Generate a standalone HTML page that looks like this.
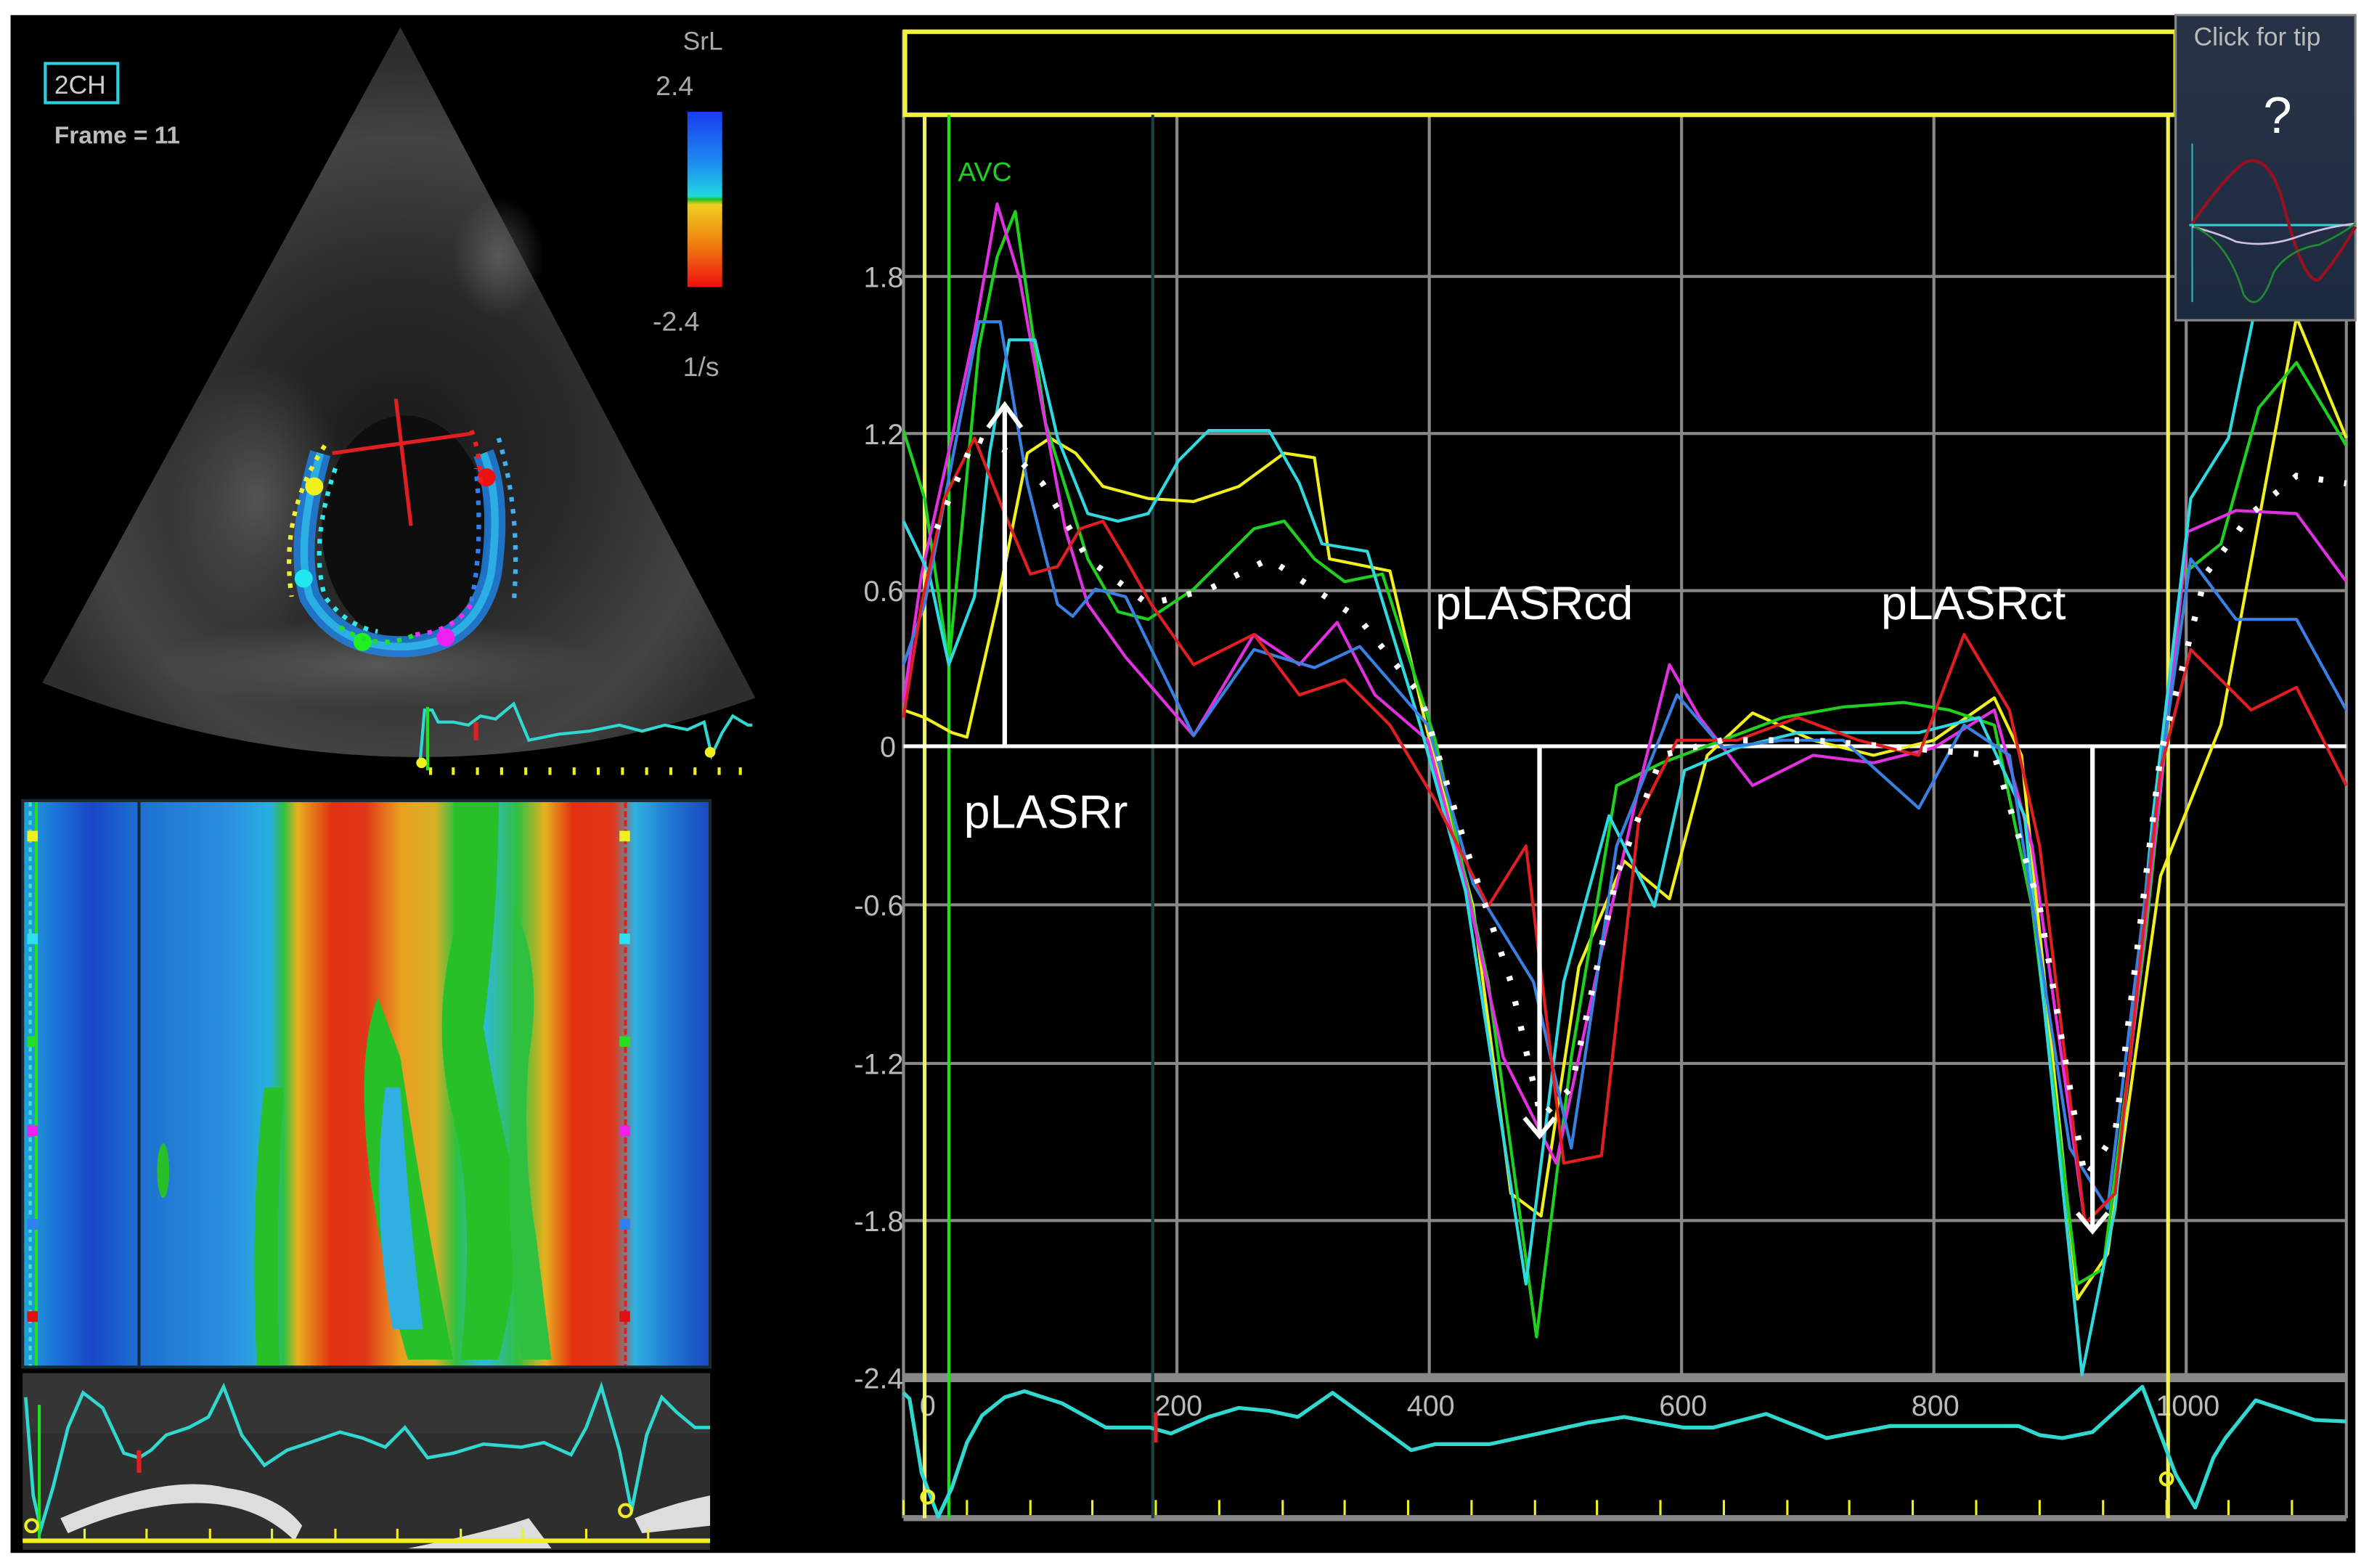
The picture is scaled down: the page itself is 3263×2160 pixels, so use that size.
<!DOCTYPE html>
<html><head><meta charset="utf-8"><style>
html,body{margin:0;padding:0;background:#fff;width:3263px;height:2160px;overflow:hidden}
svg{display:block}
text{font-family:"Liberation Sans","DejaVu Sans",sans-serif}
</style></head><body>
<svg width="3263" height="2160" viewBox="0 0 1568 1038" preserveAspectRatio="none" xmlns="http://www.w3.org/2000/svg">
<defs>
<radialGradient id="fan" cx="265" cy="300" r="260" gradientUnits="userSpaceOnUse">
<stop offset="0" stop-color="#1a1a1a"/><stop offset="0.45" stop-color="#2a2a2a"/><stop offset="0.8" stop-color="#444"/><stop offset="1" stop-color="#2e2e2e"/></radialGradient>
<linearGradient id="bar" x1="0" y1="0" x2="0" y2="1">
<stop offset="0" stop-color="#1a3cf0"/><stop offset="0.3" stop-color="#1e8ef0"/><stop offset="0.48" stop-color="#20d8e0"/><stop offset="0.5" stop-color="#20c020"/><stop offset="0.53" stop-color="#f0d020"/><stop offset="0.75" stop-color="#f08010"/><stop offset="1" stop-color="#f01010"/></linearGradient>
<linearGradient id="mm" x1="15" y1="0" x2="470" y2="0" gradientUnits="userSpaceOnUse">
<stop offset="0" stop-color="#20a8d8"/><stop offset="0.04" stop-color="#1d7ad8"/><stop offset="0.1" stop-color="#1848c8"/><stop offset="0.17" stop-color="#1e70d0"/><stop offset="0.3" stop-color="#2a90e0"/><stop offset="0.36" stop-color="#28b0e0"/><stop offset="0.38" stop-color="#30c040"/><stop offset="0.4" stop-color="#e8b020"/><stop offset="0.45" stop-color="#e03010"/><stop offset="0.5" stop-color="#e03818"/><stop offset="0.55" stop-color="#e8a020"/><stop offset="0.6" stop-color="#d8b028"/><stop offset="0.63" stop-color="#30c040"/><stop offset="0.67" stop-color="#30b8e0"/><stop offset="0.72" stop-color="#30c040"/><stop offset="0.76" stop-color="#e8b020"/><stop offset="0.8" stop-color="#e03010"/><stop offset="0.86" stop-color="#e03818"/><stop offset="0.89" stop-color="#30b0e0"/><stop offset="0.95" stop-color="#1e70d0"/><stop offset="1" stop-color="#1a48c0"/></linearGradient>
<linearGradient id="tip" x1="0" y1="0" x2="0" y2="1"><stop offset="0" stop-color="#2a3448"/><stop offset="1" stop-color="#1c2a40"/></linearGradient>
<radialGradient id="wall" cx="0.5" cy="0.5" r="0.5"><stop offset="0" stop-color="#777" stop-opacity="0.55"/><stop offset="1" stop-color="#777" stop-opacity="0"/></radialGradient>
</defs>
<rect x="0" y="0" width="1568" height="1038" fill="#fff"/>
<rect x="7" y="10" width="1552" height="1018" fill="#000"/>

<!-- echo fan -->
<path d="M265,18 L28,452 Q265,545 500,462 Z" fill="url(#fan)"/>
<ellipse cx="170" cy="330" rx="60" ry="90" fill="url(#wall)"/>
<ellipse cx="250" cy="440" rx="150" ry="30" fill="url(#wall)"/>
<ellipse cx="330" cy="170" rx="30" ry="40" fill="url(#wall)"/>
<ellipse cx="268" cy="350" rx="55" ry="75" fill="#0e0e0e"/>
<path d="M212,300 Q195,360 205,395 Q225,430 270,428 Q315,425 325,380 Q332,330 320,300" fill="none" stroke="#1e80e0" stroke-width="14" opacity="0.85"/>
<path d="M212,300 Q195,360 205,395 Q225,430 270,428 Q315,425 325,380 Q332,330 320,300" fill="none" stroke="#30c8f0" stroke-width="5" opacity="0.7"/>
<g>
<circle cx="208" cy="322" r="6" fill="#f0f020"/><circle cx="201" cy="383" r="6" fill="#20e8f0"/>
<circle cx="240" cy="425" r="6" fill="#20f020"/><circle cx="295" cy="422" r="6" fill="#f020f0"/>
<circle cx="322" cy="316" r="6" fill="#f01010"/>
</g>
<g fill="none" stroke-dasharray="3 5" stroke-width="3">
<path d="M215,295 Q185,340 193,395" stroke="#f0f030"/>
<path d="M222,310 Q205,360 215,395 Q230,415 250,418" stroke="#30e8f0"/>
<path d="M225,415 Q250,432 275,420" stroke="#20e020"/>
<path d="M275,420 Q300,418 312,400" stroke="#f030f0"/>
<path d="M312,398 Q320,360 315,310" stroke="#3080f0"/>
<path d="M330,290 Q345,340 340,400" stroke="#40b0f0"/>
<path d="M312,285 Q318,300 318,320" stroke="#f02020"/>
</g>
<path d="M220,300 L312,287" stroke="#e02020" stroke-width="2.5"/>
<path d="M262,264 L272,348" stroke="#e02020" stroke-width="2.5"/>
<!-- small ECG -->
<path d="M278,505 L281,470 L286,470 L290,478 L300,478 L310,480 L318,474 L328,476 L340,466 L350,490 L370,486 L390,484 L410,480 L425,484 L440,480 L455,483 L466,478 L471,500 L478,485 L485,474 L495,480 L498,480" fill="none" stroke="#30d8d0" stroke-width="2"/>
<path d="M283,468 L283,510" stroke="#20e020" stroke-width="2"/>
<path d="M315,478 L315,490" stroke="#e02020" stroke-width="3"/>
<g stroke="#f0f020" stroke-width="2"><path d="M285,508v5M300,508v5M316,508v5M332,508v5M348,508v5M364,508v5M380,508v5M396,508v5M412,508v5M428,508v5M444,508v5M460,508v5M476,508v5M490,508v5"/></g>
<circle cx="279" cy="505" r="3.5" fill="#f0f020"/><circle cx="470" cy="498" r="3.5" fill="#f0f020"/>

<!-- labels -->
<rect x="30" y="42" width="48" height="26" fill="none" stroke="#30d0e0" stroke-width="2"/>
<text x="36" y="62" font-size="17" fill="#ccc">2CH</text>
<text x="36" y="95" font-size="16" fill="#bbb" font-weight="bold">Frame = 11</text>
<text x="452" y="33" font-size="17" fill="#aaa">SrL</text>
<text x="434" y="63" font-size="18" fill="#aaa">2.4</text>
<rect x="455" y="74" width="23" height="116" fill="url(#bar)"/>
<text x="432" y="219" font-size="18" fill="#aaa">-2.4</text>
<text x="452" y="249" font-size="18" fill="#aaa">1/s</text>

<!-- color M-mode -->
<rect x="14" y="529" width="457" height="377" fill="#1a2a30"/>
<rect x="16" y="531" width="453" height="373" fill="url(#mm)"/>
<g fill="#28c028">
<path d="M250,660 Q235,700 245,780 Q255,850 270,900 L300,900 Q280,800 265,700 Z"/>
<path d="M300,531 L330,531 Q330,600 320,680 Q330,740 345,800 Q340,860 330,900 L305,900 Q315,800 300,740 Q285,680 300,620 Z"/>
<path d="M340,600 Q360,640 350,700 Q345,760 355,820 L365,900 L345,900 Q335,820 338,740 Z" fill="#30c040"/>
<path d="M175,720 Q165,800 170,904 L185,904 Q182,800 188,720 Z"/>
<ellipse cx="108" cy="775" rx="4" ry="18"/>
</g>
<path d="M255,720 Q245,800 260,880 L280,880 Q270,800 265,720 Z" fill="#30b0e0"/>
<path d="M92,531 V904" stroke="#0a2a40" stroke-width="2"/>
<path d="M24,531 V904" stroke="#20e020" stroke-width="2"/>
<path d="M20,531 V904" stroke="#40e0d0" stroke-width="2" stroke-dasharray="3 3"/>
<path d="M414,531 V904" stroke="#e02020" stroke-width="2" stroke-dasharray="4 2"/>
<g><rect x="18" y="550" width="7" height="7" fill="#f0f020"/><rect x="18" y="618" width="7" height="7" fill="#30e0f0"/><rect x="18" y="686" width="7" height="7" fill="#20e020"/><rect x="18" y="745" width="7" height="7" fill="#f020f0"/><rect x="18" y="807" width="7" height="7" fill="#3080f0"/><rect x="18" y="868" width="7" height="7" fill="#e01010"/>
<rect x="410" y="550" width="7" height="7" fill="#f0f020"/><rect x="410" y="618" width="7" height="7" fill="#30e0f0"/><rect x="410" y="686" width="7" height="7" fill="#20e020"/><rect x="410" y="745" width="7" height="7" fill="#f020f0"/><rect x="410" y="807" width="7" height="7" fill="#3080f0"/><rect x="410" y="868" width="7" height="7" fill="#e01010"/></g>

<!-- bottom M-mode -->
<rect x="15" y="909" width="455" height="117" fill="#2e2e2e"/>
<rect x="15" y="909" width="455" height="40" fill="#3a3a3a" opacity="0.6"/>
<path d="M40,1005 Q110,975 150,985 Q185,990 200,1010 L195,1020 Q170,995 130,995 Q90,995 45,1015 Z" fill="#ddd"/>
<path d="M270,1025 Q320,1015 350,1005 L365,1025 Z" fill="#ddd"/>
<path d="M420,1005 Q445,995 470,990 L470,1010 L425,1015 Z" fill="#ddd"/>
<path d="M17,925 L22,990 L27,1012 L35,985 L45,945 L55,922 L68,932 L82,962 L92,965 L100,960 L110,950 L125,945 L138,938 L148,918 L160,950 L175,970 L190,960 L205,955 L225,948 L240,952 L255,958 L268,945 L283,965 L300,962 L320,956 L345,958 L360,955 L378,963 L388,945 L398,918 L410,960 L418,1000 L428,950 L438,925 L448,935 L460,945 L470,945" fill="none" stroke="#30d8d0" stroke-width="2.2"/>
<path d="M26,930 V1020" stroke="#20e020" stroke-width="2"/>
<path d="M92,960 V975" stroke="#e02020" stroke-width="3"/>
<circle cx="21" cy="1010" r="4" fill="none" stroke="#f0f020" stroke-width="2"/><circle cx="414" cy="1000" r="4" fill="none" stroke="#f0f020" stroke-width="2"/>
<path d="M15,1020 H470" stroke="#f0f020" stroke-width="3"/>
<g stroke="#f0f020" stroke-width="1.5"><path d="M56,1012v8M97,1012v8M139,1012v8M180,1012v8M222,1012v8M263,1012v8M305,1012v8M346,1012v8M388,1012v8M429,1012v8"/></g>

<!-- right chart -->
<g stroke="#888" stroke-width="2">
<path d="M598,183H1553M598,287H1553M598,391H1553M598,599H1553M598,704H1553M598,808H1553"/>
<path d="M779,76V912M946,76V912M1113,76V912M1280,76V912M1447,212V912"/>
<path d="M598,20V1005"/>
<path d="M598,912H1553" stroke-width="6"/>
<path d="M598,1005H1553" stroke-width="4"/>
<path d="M1553,212V1005"/>
</g>
<g font-size="19" fill="#bbb" text-anchor="end">
<text x="598" y="190">1.8</text><text x="598" y="294">1.2</text><text x="598" y="398">0.6</text><text x="593" y="501">0</text><text x="598" y="606">-0.6</text><text x="598" y="711">-1.2</text><text x="598" y="815">-1.8</text><text x="598" y="919">-2.4</text>
</g>
<g font-size="19" fill="#bbb" text-anchor="middle">
<text x="614" y="937">0</text><text x="780" y="937">200</text><text x="947" y="937">400</text><text x="1114" y="937">600</text><text x="1281" y="937">800</text><text x="1448" y="937">1000</text>
</g>
<rect x="599" y="21" width="841" height="55" fill="none" stroke="#f0f040" stroke-width="3"/>
<path d="M612,76V1005M1435,76V1005" stroke="#f0f060" stroke-width="2.5"/>
<path d="M628,76V1005" stroke="#20e020" stroke-width="2"/>
<path d="M763,76V1005" stroke="#1a4040" stroke-width="2"/>
<text x="634" y="120" font-size="18" fill="#20d020">AVC</text>
<path d="M598,494H1553" stroke="#fff" stroke-width="2.5"/>

<g fill="none" stroke-width="2" stroke-linejoin="round">
<polyline stroke="#f0f020" points="598,470 612,475 630,485 640,488 660,400 680,300 695,290 712,300 730,322 760,330 790,332 820,322 850,300 870,303 880,370 920,378 945,485 975,600 1000,790 1020,805 1045,640 1075,570 1105,595 1130,500 1160,472 1200,490 1240,500 1280,490 1320,462 1338,500 1375,860 1395,830 1430,580 1470,480 1520,210 1553,290"/>
<polyline stroke="#20d020" points="598,285 612,330 628,440 648,230 660,170 672,140 692,280 720,370 740,405 760,410 790,390 830,350 850,345 870,370 890,385 915,380 950,490 985,650 1017,885 1040,700 1070,520 1100,505 1140,490 1180,475 1220,468 1260,465 1290,470 1320,480 1345,600 1375,850 1392,840 1420,620 1445,380 1470,360 1495,270 1520,240 1553,295"/>
<polyline stroke="#e030e0" points="598,465 610,380 630,290 645,220 660,135 675,185 690,270 705,350 720,400 745,435 790,487 830,420 860,440 885,412 910,460 945,490 970,585 995,700 1030,770 1060,630 1085,520 1105,440 1125,475 1160,520 1200,500 1240,505 1280,495 1320,470 1345,560 1380,810 1400,790 1430,520 1448,352 1480,338 1520,340 1553,385"/>
<polyline stroke="#30d8e0" points="598,345 615,380 628,440 645,395 655,300 668,225 685,225 700,290 720,340 740,345 760,340 780,305 800,285 840,285 860,320 875,360 905,365 940,480 970,590 1010,850 1035,650 1065,540 1095,600 1115,510 1150,495 1190,485 1230,485 1270,485 1310,475 1340,540 1378,910 1400,800 1425,540 1450,330 1475,290 1510,120 1553,90"/>
<polyline stroke="#3a80e0" points="598,440 612,400 635,280 648,213 662,213 680,320 700,400 710,408 725,390 745,395 790,487 830,430 870,442 900,428 945,480 975,585 1015,650 1040,760 1070,560 1090,510 1110,460 1140,495 1180,490 1220,490 1270,535 1300,480 1330,500 1370,760 1395,800 1430,510 1450,370 1480,410 1520,410 1553,470"/>
<polyline stroke="#e02020" points="598,475 610,400 625,330 645,290 665,340 682,380 700,375 715,350 730,345 745,370 762,400 790,440 830,420 860,460 890,450 920,480 950,530 985,600 1010,560 1035,770 1060,765 1085,540 1110,490 1150,490 1190,475 1230,490 1270,500 1300,420 1330,470 1350,560 1380,810 1400,790 1430,510 1450,430 1490,470 1520,455 1553,520"/>
</g>
<polyline fill="none" stroke="#fff" stroke-width="4" stroke-dasharray="3 14" points="620,350 645,290 670,300 690,320 720,370 760,400 800,390 840,370 870,390 900,410 940,460 970,560 1000,650 1020,740 1040,720 1070,580 1100,500 1140,490 1200,490 1260,495 1320,500 1350,600 1380,780 1400,750 1430,500 1460,380 1490,340 1520,315 1553,320"/>

<!-- annotations -->
<g stroke="#fff" stroke-width="3" fill="none">
<path d="M665,494V268M654,283L665,268L676,283"/>
<path d="M1019,494V752M1009,740L1019,752L1029,740"/>
<path d="M1385,494V815M1375,803L1385,815L1395,803"/>
</g>
<g font-size="31" fill="#fff">
<text x="638" y="548" font-family="Liberation Serif, serif">pLASRr</text>
<text x="950" y="410" font-family="Liberation Serif, serif">pLASRcd</text>
<text x="1245" y="410" font-family="Liberation Serif, serif">pLASRct</text>
</g>

<!-- bottom ECG -->
<path d="M598,922 L602,926 L610,975 L621,1004 L630,985 L640,955 L650,937 L665,925 L678,921 L703,929 L732,945 L761,945 L775,949 L800,938 L820,932 L840,934 L859,938 L882,922 L934,960 L950,956 L986,956 L1023,948 L1050,942 L1075,938 L1114,945 L1134,945 L1169,936 L1209,952 L1230,948 L1251,944 L1336,944 L1350,950 L1365,952 L1385,948 L1418,918 L1440,976 L1453,998 L1465,965 L1473,952 L1493,927 L1532,940 L1553,941" fill="none" stroke="#30d8d0" stroke-width="2.5" stroke-linejoin="round"/>
<path d="M765,935V955" stroke="#e02020" stroke-width="2.5"/>
<circle cx="614" cy="991" r="4" fill="none" stroke="#f0f020" stroke-width="2"/>
<circle cx="1434" cy="979" r="4" fill="none" stroke="#f0f020" stroke-width="2"/>
<g stroke="#f0f020" stroke-width="1.5"><path d="M598,993v10M640,993v10M682,993v10M723,993v10M765,993v10M807,993v10M849,993v10M890,993v10M932,993v10M974,993v10M1016,993v10M1057,993v10M1099,993v10M1141,993v10M1183,993v10M1224,993v10M1266,993v10M1308,993v10M1350,993v10M1392,993v10M1434,993v10M1475,993v10M1517,993v10"/></g>

<!-- tip box -->
<rect x="1440" y="10" width="119" height="202" fill="url(#tip)" stroke="#888" stroke-width="1.5"/>
<rect x="1441" y="11" width="117" height="24" fill="#283246"/>
<text x="1452" y="30" font-size="17" fill="#bbb">Click for tip</text>
<text x="1498" y="88" font-size="34" fill="#fff">?</text>
<path d="M1451,95V200" stroke="#30b8b8" stroke-width="1"/>
<path d="M1449,149H1559" stroke="#30d0d0" stroke-width="1.5"/>
<path d="M1451,148 Q1470,120 1485,108 Q1500,100 1510,130 Q1525,190 1535,185 Q1548,170 1559,150" fill="none" stroke="#9a1020" stroke-width="2"/>
<path d="M1451,150 Q1470,155 1480,160 Q1500,164 1520,157 Q1540,150 1559,148" fill="none" stroke="#d0c0e0" stroke-width="1.3"/>
<path d="M1452,150 Q1475,160 1485,195 Q1495,210 1505,180 Q1515,165 1535,162 Q1550,155 1559,148" fill="none" stroke="#208a30" stroke-width="1.3"/>
</svg>
</body></html>
